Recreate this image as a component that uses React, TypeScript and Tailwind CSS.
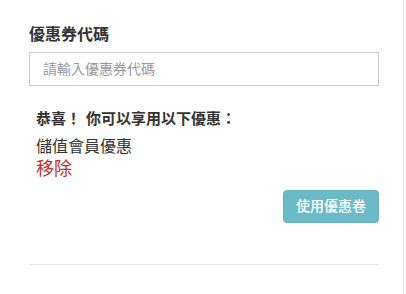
import React from 'react';

const font = '"Helvetica Neue", "Liberation Sans", "Noto Sans CJK TC", sans-serif';

export default function App() {
  return (
    <div className="h-[294px] w-[406px] bg-white" style={{ fontFamily: font }}>
      <div className="h-full w-[404px] border-r border-[#e3e3e3] pl-[29px] pt-[24px]">
        <div className="w-[350px]">
          <label className="block text-[16px] font-bold leading-[22px] text-[#333]">優惠券代碼</label>
          <input
            type="text"
            placeholder="請輸入優惠券代碼"
            className="mt-[6px] block h-[34px] w-[350px] border border-[#ccc] px-[13px] text-[14px] text-[#555] placeholder:text-[#999] outline-none"
          />
          <div className="mt-[22px] pl-[7px]">
            <div className="text-[15px] font-bold leading-[22px] text-[#333]">
              恭喜！<span className="ml-[5px]">你可以享用以下優惠：</span>
            </div>
            <div className="mt-[6px] text-[16px] leading-[22px] text-[#333]">儲值會員優惠</div>
            <div className="text-[18px] leading-[22px] text-[#c9302c]">移除</div>
          </div>
          <div className="mt-[10px] flex justify-end">
            <button
              type="button"
              className="h-[33px] w-[96px] rounded-[4px] border border-[#64b0be] bg-[#6cb9c7] text-[14px] font-medium text-white"
            >
              使用優惠卷
            </button>
          </div>
          <div className="mt-[41px] h-px w-[350px] bg-[#e5e5e5]" />
        </div>
      </div>
    </div>
  );
}
